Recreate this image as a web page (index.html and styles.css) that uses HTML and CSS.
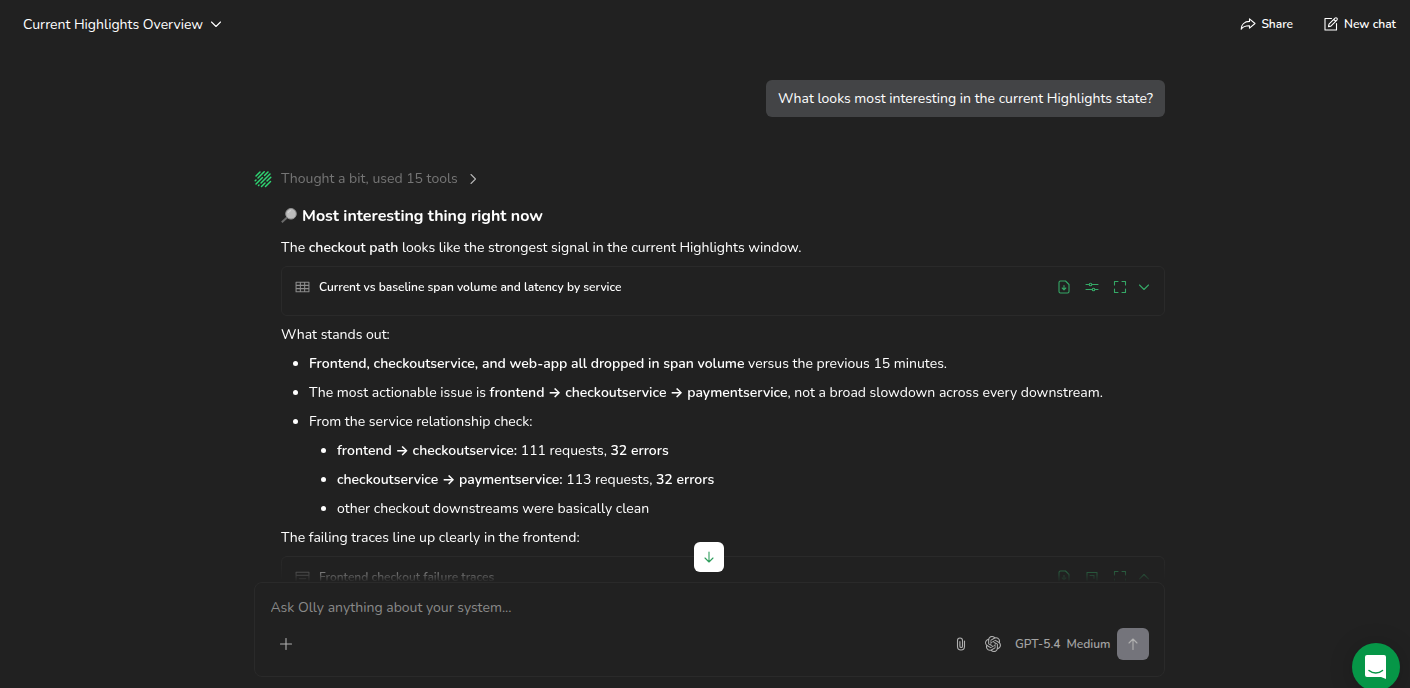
FILE: index.html
```html
<!DOCTYPE html>
<html lang="en">
<head>
	<meta charset="UTF-8">
	<title>Current Highlights Overview</title>
	<link rel="stylesheet" href="styles.css">
</head>
<body>
	<!-- shared icons -->
	<svg class="sprite" aria-hidden="true">
		<symbol id="i-table" viewBox="0 0 14 12"><path d="M1 1.500h12v9H1zM1 4.500h12M1 7.500h12M5 1.500v9M9 1.500v9"/></symbol>
		<symbol id="i-window" viewBox="0 0 14 12"><path d="M1 1.500h12v9H1zM1 4.500h12M4 7.500h6"/></symbol>
		<symbol id="i-file" viewBox="0 0 14 14"><path d="M3.500 1h5l3.500 3.500v7a1.500 1.500 0 0 1-1.500 1.500h-7A1.500 1.500 0 0 1 2 11.500v-9A1.500 1.500 0 0 1 3.500 1zM7 5.500v4M5.200 8l1.800 1.800L8.800 8"/></symbol>
		<symbol id="i-sliders" viewBox="0 0 14 14"><path d="M1 4.500h3M7 4.500h6M1 9.500h6M10 9.500h3"/><circle cx="5.500" cy="4.500" r="1.300"/><circle cx="8.500" cy="9.500" r="1.300"/></symbol>
		<symbol id="i-box" viewBox="0 0 14 14"><path d="M2 2.500h10v9H2zM5 5.500h4v3"/></symbol>
		<symbol id="i-expand" viewBox="0 0 14 14"><path d="M1.500 5V1.500H5M9 1.500h3.500V5M12.500 9v3.500H9M5 12.500H1.500V9"/></symbol>
		<symbol id="i-down" viewBox="0 0 12 12"><path d="M1.500 4 6 8.500 10.500 4"/></symbol>
		<symbol id="i-up" viewBox="0 0 12 12"><path d="M1.500 8 6 3.500 10.500 8"/></symbol>
	</svg>

	<div class="app">
		<header class="topbar">
			<button class="title">Current Highlights Overview <svg class="icon s12"><use href="#i-down"/></svg></button>
			<div class="actions">
				<button class="action">
					<svg class="icon s16" viewBox="0 0 16 16"><path d="M9.500 2.800 15 7.500l-5.500 4.700V9.700C5.500 9.600 3 10.500 1.200 13.200 1.200 8.500 4.500 5.500 9.500 5.400z"/></svg>
					Share
				</button>
				<button class="action">
					<svg class="icon s16" viewBox="0 0 16 16"><path d="M8.500 2.500h-6.500v11.500h11.500V7.500M6 8.200l6-6a1.300 1.300 0 0 1 1.900 1.900l-6 6-2.400.5zM10.800 3.400l1.900 1.900"/></svg>
					New chat
				</button>
			</div>
		</header>

		<main class="thread">
			<div class="column">
				<div class="bubble">What looks most interesting in the current Highlights state?</div>
				<button class="thought">
					<svg class="logo" viewBox="0 0 18 18">
						<path d="M2 6 6 2M1.200 10.800 2 10M4 8 10.200 1.800M2 14 8.500 7.500M10.500 5.500 14 2M4.500 15.500 5 15M7 13 16 4M7.500 16.500 11 13M13 11 16.800 7.200M11.500 16.500 16.500 11.500"/>
					</svg>
					<span>Thought a bit, used 15 tools</span>
					<svg class="icon s12 light" viewBox="0 0 12 12"><path d="M4 1.500 8.500 6 4 10.500"/></svg>
				</button>

				<article class="answer">
					<h3>
						<svg class="glass" viewBox="0 0 17 17">
							<path d="M6 9.500 .8 14.300" stroke="#6b6b6b" stroke-width="2"/>
							<circle cx="10" cy="5.800" r="5.300" fill="#bdbdbd" stroke="#8f8f8f"/>
							<path d="M7 5a3.400 3.400 0 0 1 3-2.400" stroke="#d9d9d9" fill="none"/>
						</svg>
						Most interesting thing right now
					</h3>
					<p>The <b>checkout path</b> looks like the strongest signal in the current Highlights window.</p>
					<section class="card">
						<svg class="icon table"><use href="#i-table"/></svg>
						<h4>Current vs baseline span volume and latency by service</h4>
						<div class="tools">
							<button aria-label="Download"><svg class="icon s14"><use href="#i-file"/></svg></button>
							<button aria-label="Settings"><svg class="icon s14"><use href="#i-sliders"/></svg></button>
							<button aria-label="Full screen"><svg class="icon s14"><use href="#i-expand"/></svg></button>
							<button aria-label="Expand"><svg class="icon s12"><use href="#i-down"/></svg></button>
						</div>
					</section>
					<p>What stands out:</p>
					<ul>
						<li><b>Frontend, checkoutservice, and web-app all dropped in span volume</b> versus the previous 15 minutes.</li>
						<li>The most actionable issue is <b>frontend → checkoutservice → paymentservice</b>, not a broad slowdown across every downstream.</li>
						<li>From the service relationship check:
							<ul>
								<li><b>frontend → checkoutservice:</b> 111 requests, <b>32 errors</b></li>
								<li><b>checkoutservice → paymentservice:</b> 113 requests, <b>32 errors</b></li>
								<li>other checkout downstreams were basically clean</li>
							</ul>
						</li>
					</ul>
					<p>The failing traces line up clearly in the frontend:</p>
					<section class="card">
						<svg class="icon table"><use href="#i-window"/></svg>
						<h4>Frontend checkout failure traces</h4>
						<div class="tools">
							<button aria-label="Download"><svg class="icon s14"><use href="#i-file"/></svg></button>
							<button aria-label="Open"><svg class="icon s14"><use href="#i-box"/></svg></button>
							<button aria-label="Full screen"><svg class="icon s14"><use href="#i-expand"/></svg></button>
							<button aria-label="Collapse"><svg class="icon s12"><use href="#i-up"/></svg></button>
						</div>
					</section>
				</article>
			</div>
		</main>

		<form class="composer">
			<button type="button" class="jump" aria-label="Scroll to bottom">
				<svg class="icon s14" viewBox="0 0 14 14"><path d="M7 2v10M3 8l4 4 4-4"/></svg>
			</button>
			<input class="ask" type="text" aria-label="Message" placeholder="Ask Olly anything about your system...">
			<div class="controls">
				<button type="button" class="plus" aria-label="Add"><svg class="icon s12" viewBox="0 0 12 12"><path d="M6 .5v11M.5 6h11"/></svg></button>
				<button type="button" class="clip" aria-label="Attach"><svg class="icon s14" viewBox="0 0 14 14"><path d="M10.500 4v5.500a3.500 3.500 0 0 1-7 0V3.500a2.500 2.500 0 0 1 5 0v5.700a1.300 1.300 0 0 1-2.600 0V4.500"/></svg></button>
				<button type="button" class="model">
					<svg class="gpt" viewBox="0 0 24 24"><path d="M22.2819 9.8211a5.9847 5.9847 0 0 0-.5157-4.9108 6.0462 6.0462 0 0 0-6.5098-2.9A6.0651 6.0651 0 0 0 4.9807 4.1818a5.9847 5.9847 0 0 0-3.9977 2.9 6.0462 6.0462 0 0 0 .7427 7.0966 5.98 5.98 0 0 0 .511 4.9107 6.051 6.051 0 0 0 6.5146 2.9001A5.9847 5.9847 0 0 0 13.2599 24a6.0557 6.0557 0 0 0 5.7718-4.2058 5.9894 5.9894 0 0 0 3.9977-2.9001 6.0557 6.0557 0 0 0-.7475-7.073zm-9.022 12.6081a4.4755 4.4755 0 0 1-2.8764-1.0408l.1419-.0804 4.7783-2.7582a.7948.7948 0 0 0 .3927-.6813v-6.7369l2.02 1.1686a.071.071 0 0 1 .038.052v5.5826a4.504 4.504 0 0 1-4.4945 4.4944zm-9.6607-4.1254a4.4708 4.4708 0 0 1-.5346-3.0137l.142.0852 4.783 2.7582a.7712.7712 0 0 0 .7806 0l5.8428-3.3685v2.3324a.0804.0804 0 0 1-.0332.0615L9.74 19.9502a4.4992 4.4992 0 0 1-6.1408-1.6464zM2.3408 7.8956a4.485 4.485 0 0 1 2.3655-1.9728V11.6a.7664.7664 0 0 0 .3879.6765l5.8144 3.3543-2.0201 1.1685a.0757.0757 0 0 1-.071 0l-4.8303-2.7865A4.504 4.504 0 0 1 2.3408 7.872zm16.5963 3.8558L13.1038 8.364 15.1192 7.2a.0757.0757 0 0 1 .071 0l4.8303 2.7913a4.4944 4.4944 0 0 1-.6765 8.1042v-5.6772a.79.79 0 0 0-.407-.667zm2.0107-3.0231l-.142-.0852-4.7735-2.7818a.7759.7759 0 0 0-.7854 0L9.409 9.2297V6.8974a.0662.0662 0 0 1 .0284-.0615l4.8303-2.7866a4.4992 4.4992 0 0 1 6.6802 4.66zM8.3065 12.863l-2.02-1.1638a.0804.0804 0 0 1-.038-.0567V6.0742a4.4992 4.4992 0 0 1 7.3757-3.4537l-.142.0805L8.704 5.459a.7948.7948 0 0 0-.3927.6813zm1.0976-2.3654l2.602-1.4998 2.6069 1.4998v2.9994l-2.5974 1.4997-2.6067-1.4997Z"/></svg>
					<span>GPT-5.4</span>
					<span>Medium</span>
				</button>
				<button class="send" aria-label="Send"><svg class="icon s14" viewBox="0 0 14 14"><path d="M7 12.500V2M3 6l4-4 4 4"/></svg></button>
			</div>
		</form>
	</div>

	<button class="messenger" aria-label="Open messenger">
		<svg viewBox="0 0 24 26"><path d="M3 1h17a2 2 0 0 1 2 2v22l-5-2H3a2 2 0 0 1-2-2V3a2 2 0 0 1 2-2z" fill="#fff"/><path d="M5 16.500c4 3.400 9.500 3.400 13.500 0" fill="none" stroke="#069647" stroke-width="1.500" stroke-linecap="round"/></svg>
	</button>
</body>
</html>
```
FILE: styles.css
```css
*{
	box-sizing: border-box;
	padding: 0;
	margin: 0;
}
html,body{
	height: 100%;
	overflow: hidden;
}
body{
	background-color: #212121;
	color: #fff;
	font-family: Nunito, Inter, "Open Sans", sans-serif;
	font-size: 14px;
	line-height: 21px;
}
button,input{
	font: inherit;
	color: inherit;
	background: none;
	border: none;
}
button{
	display: flex;
	align-items: center;
	cursor: pointer;
}
b,h3,h4{
	font-weight: 600;
}
.sprite{
	display: none;
}
.icon{
	display: block;
	flex: none;
	fill: none;
	stroke: currentColor;
	stroke-width: 1.1;
	stroke-linecap: round;
	stroke-linejoin: round;
}
.s12{
	width: 12px;
	height: 12px;
}
.s14{
	width: 14px;
	height: 14px;
}
.s16{
	width: 16px;
	height: 16px;
}
.light{
	color: #b5b5b5;
}
.app{
	height: 100%;
	display: flex;
	flex-direction: column;
}

/* top bar */
.topbar{
	height: 48px;
	padding: 0 14px 0 23px;
	flex: none;
	display: flex;
	align-items: center;
	justify-content: space-between;
}
.title{
	gap: 7px;
}
.actions{
	display: flex;
	gap: 30px;
}
.action{
	gap: 5px;
	font-size: 12px;
	font-weight: 600;
}

/* conversation */
.thread{
	flex: 1;
	min-height: 0;
	overflow: hidden;
	padding: 32px 0 0 9px;
	-webkit-mask-image: linear-gradient(to top, transparent, #000 24px);
	mask-image: linear-gradient(to top, transparent, #000 24px);
}
.column{
	max-width: 911px;
	margin: 0 auto;
	display: flex;
	flex-direction: column;
}
.bubble{
	align-self: flex-end;
	padding: 8px 12px;
	border-radius: 6px;
	background-color: #434446;
}
.thought{
	align-self: flex-start;
	margin-top: 51px;
	gap: 9px;
	color: #757575;
}
.logo{
	width: 18px;
	height: 18px;
	fill: none;
	stroke: #2fd673;
	stroke-width: 1.5;
	stroke-linecap: round;
}
.answer{
	padding-left: 27px;
	margin-top: 15px;
	display: flex;
	flex-direction: column;
	gap: 8px;
}
h3{
	display: flex;
	align-items: center;
	gap: 4px;
	font-size: 16px;
	line-height: 25px;
	font-weight: 700;
}
.glass{
	width: 17px;
	height: 17px;
}
ul{
	padding-left: 28px;
	list-style: disc;
	display: flex;
	flex-direction: column;
	gap: 8px;
}
li ul{
	margin-top: 8px;
}
.card{
	height: 50px;
	padding: 10px 14px 0 13px;
	border: 1px solid #2a2a2a;
	border-radius: 6px;
	display: flex;
	align-items: flex-start;
	gap: 9px;
}
.card h4{
	flex: 1;
	font-size: 12px;
	line-height: 20px;
}
.table{
	width: 15px;
	height: 20px;
	color: #8c8c8c;
	stroke-width: 1;
}
.tools{
	height: 20px;
	display: flex;
	align-items: center;
	gap: 14px;
	color: #35a866;
}
.tools button:last-child{
	margin-left: -3px;
}

/* message box */
.composer{
	position: relative;
	flex: none;
	width: 911px;
	max-width: 100%;
	height: 95px;
	margin: 0 auto 11px;
	left: 4px;
	padding: 14px 15px 15px 16px;
	border: 1px solid #2a2a2a;
	border-radius: 8px;
	display: flex;
	flex-direction: column;
	gap: 10px;
}
.jump{
	position: absolute;
	top: -41px;
	left: 50%;
	margin-left: -15px;
	width: 30px;
	height: 30px;
	justify-content: center;
	border-radius: 6px;
	background-color: #fff;
	color: #2f9e5d;
}
.ask{
	width: 100%;
	height: 21px;
	outline: none;
}
.ask::placeholder{
	color: #8a8a8a;
	opacity: 1;
}
.controls{
	display: flex;
	align-items: center;
	color: #b0b0b0;
}
.plus{
	margin-left: 9px;
	margin-right: auto;
}
.clip{
	margin-right: 17px;
}
.model{
	gap: 6px;
	margin-right: 6px;
	font-size: 12px;
	font-weight: 600;
	color: #a3a3a3;
}
.gpt{
	width: 16px;
	height: 16px;
	margin-right: 8px;
	fill: #b0b0b0;
}
.send{
	width: 32px;
	height: 32px;
	justify-content: center;
	border-radius: 6px;
	background-color: #74747b;
}

.messenger{
	position: fixed;
	right: 10px;
	bottom: -3px;
	width: 48px;
	height: 48px;
	justify-content: center;
	border-radius: 50%;
	background-color: #069647;
	box-shadow: 0 2px 24px rgba(0,0,0,0.2);
}
.messenger svg{
	width: 24px;
	height: 26px;
}
```
